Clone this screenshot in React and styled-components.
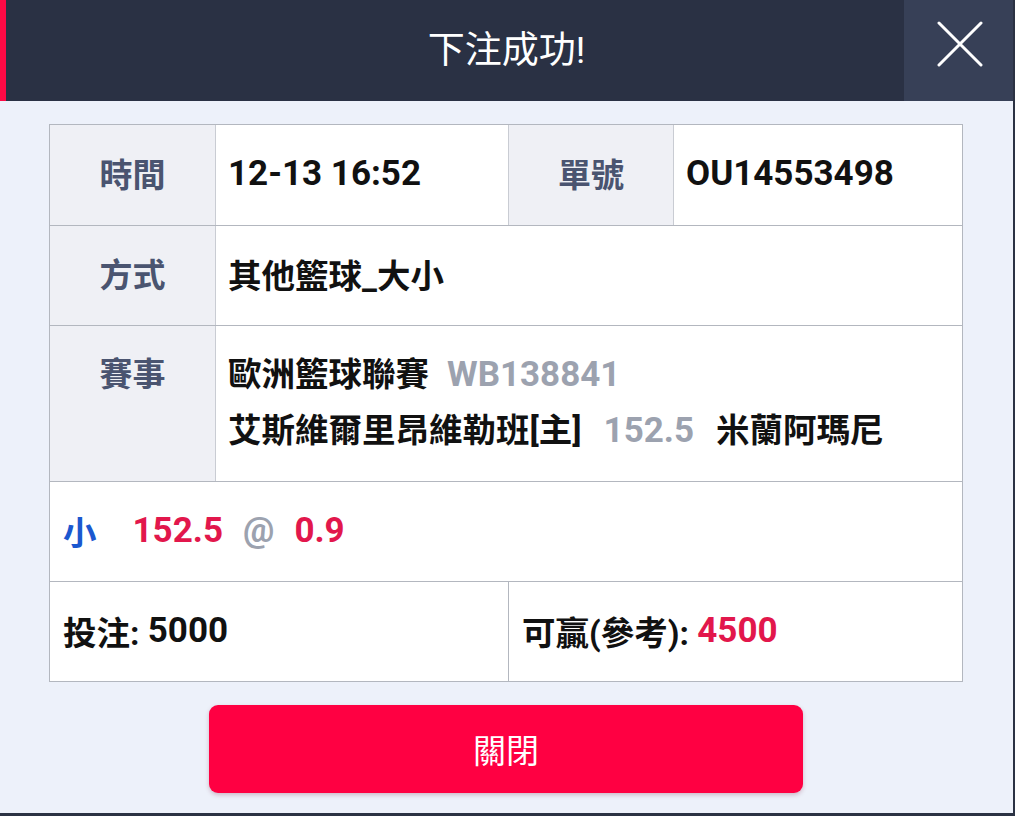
import React from 'react';
import styled, { createGlobalStyle } from 'styled-components';

const GlobalStyle = createGlobalStyle`
  html, body {
    margin: 0;
    padding: 0;
    background: #2b3243;
  }
  body {
    font-family: Roboto, "Noto Sans CJK TC", sans-serif;
  }
`;

function App() {
  return (
    <>
      <GlobalStyle />
      <Dialog>
        <Header>
          <Title>下注成功!</Title>
          <CloseButton aria-label="close">
            <svg width="46" height="46" viewBox="0 0 46 46">
              <path d="M2 2 L44 44 M44 2 L2 44" stroke="#fff" strokeWidth="3" strokeLinecap="round" />
            </svg>
          </CloseButton>
        </Header>

        <Body>
          <Table>
            <Row $first>
              <Label>時間</Label>
              <Value $w="292px"><Num>12-13 16:52</Num></Value>
              <Label $divider>單號</Label>
              <Value><Num>OU14553498</Num></Value>
            </Row>
            <Row>
              <Label>方式</Label>
              <Value>其他籃球_大小</Value>
            </Row>
            <Row $tall>
              <Label $top>賽事</Label>
              <Value $stack>
                <Line>
                  歐洲籃球聯賽<Muted>WB138841</Muted>
                </Line>
                <Line>
                  艾斯維爾里昂維勒班[主]<Muted $gap="22px">152.5</Muted><Spaced>米蘭阿瑪尼</Spaced>
                </Line>
              </Value>
            </Row>
            <Row>
              <Pick>
                <Side>小</Side>
                <Red>152.5</Red>
                <At>@</At>
                <Red>0.9</Red>
              </Pick>
            </Row>
            <Row>
              <Summary $w="458px">投注: <Num>5000</Num></Summary>
              <Summary $divider>
                可贏(參考): <Red>4500</Red>
              </Summary>
            </Row>
          </Table>

          <CloseAction>關閉</CloseAction>
        </Body>
      </Dialog>
    </>
  );
}

export default App;

// styled-components

const Dialog = styled.div`
  width: 1013px;
  height: 813px;
  background: #edf1fa;
  display: flex;
  flex-direction: column;
`;

const Header = styled.div`
  height: 101px;
  background: #2a3144;
  border-left: 6px solid #ff0a45;
  display: grid;
  grid-template-columns: 103px 1fr 109px;
`;

const Title = styled.h1`
  grid-column: 2;
  margin: 0;
  padding-bottom: 8px;
  display: flex;
  align-items: center;
  justify-content: center;
  color: #fff;
  font-size: 37px;
  font-weight: 400;
`;

const CloseButton = styled.button`
  grid-column: 3;
  border: 0;
  padding: 0 0 14px 2px;
  background: #374057;
  display: flex;
  align-items: center;
  justify-content: center;
  cursor: pointer;
`;

const Body = styled.div`
  padding: 23px 50px 0 49px;
  display: flex;
  flex-direction: column;
`;

const Table = styled.div`
  border: 1px solid #b3b7bf;
  background: #fff;
`;

const Row = styled.div`
  display: flex;
  height: ${(p) => (p.$tall ? '155px' : p.$first ? '100px' : '99px')};
  & + & {
    border-top: 1px solid #b3b7bf;
  }
`;

const Label = styled.div`
  width: 166px;
  flex-shrink: 0;
  box-sizing: border-box;
  background: #eff0f5;
  color: #4a5470;
  font-size: 33px;
  font-weight: 700;
  display: flex;
  justify-content: center;
  align-items: ${(p) => (p.$top ? 'flex-start' : 'center')};
  padding: ${(p) => (p.$top ? '21px 0 0' : '0 0 5px')};
  line-height: ${(p) => (p.$top ? '56px' : 'normal')};
  border-right: 1px solid #c9ccd3;
  ${(p) => p.$divider && 'border-left: 1px solid #c9ccd3;'}
`;

const Value = styled.div`
  ${(p) => (p.$w ? `width: ${p.$w};` : 'flex: 1;')}
  box-sizing: border-box;
  padding: 0 0 ${(p) => (p.$stack ? '1px' : '4px')} 12px;
  color: #111;
  font-size: 33.5px;
  font-weight: 700;
  display: flex;
  flex-direction: ${(p) => (p.$stack ? 'column' : 'row')};
  justify-content: center;
  ${(p) => !p.$stack && 'align-items: center; justify-content: flex-start;'}
`;

const Num = styled.span`
  font-size: 35px;
`;

const Line = styled.div`
  line-height: 56px;
  white-space: nowrap;
`;

const Muted = styled.span`
  color: #9ca2af;
  font-size: 35px;
  margin-left: ${(p) => p.$gap || '18px'};
`;

const Spaced = styled.span`
  margin-left: 22px;
`;

const Pick = styled.div`
  flex: 1;
  display: flex;
  align-items: center;
  padding: 0 0 2px 13px;
  font-size: 35px;
  font-weight: 700;
`;

const Side = styled.span`
  color: #1b58cf;
  font-size: 33.5px;
  margin-right: 36px;
`;

const Red = styled.span`
  color: #e2174c;
  font-size: 35px;
  font-weight: 700;
`;

const At = styled.span`
  color: #9ca2af;
  margin: 0 20px;
`;

const Summary = styled.div`
  ${(p) => (p.$w ? `width: ${p.$w};` : 'flex: 1;')}
  box-sizing: border-box;
  padding: 0 0 3px 13px;
  display: flex;
  align-items: center;
  color: #111;
  font-size: 33.5px;
  font-weight: 700;
  white-space: pre;
  ${(p) => p.$divider && 'border-left: 1px solid #b3b7bf;'}
`;

const CloseAction = styled.button`
  align-self: center;
  margin-top: 23px;
  width: 594px;
  height: 88px;
  border: 0;
  border-radius: 9px;
  background: #ff0042;
  color: #fff;
  font-family: Roboto, "Noto Sans CJK TC", sans-serif;
  font-size: 33px;
  font-weight: 400;
  box-shadow: 0 2px 4px rgba(120, 20, 50, 0.25);
  cursor: pointer;
`;
